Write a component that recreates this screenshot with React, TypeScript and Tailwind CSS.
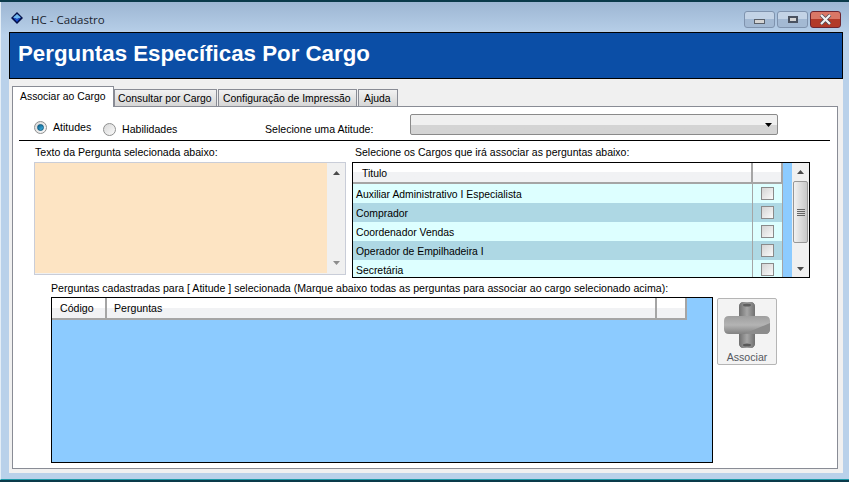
const cargos = [
  "Auxiliar Administrativo I Especialista",
  "Comprador",
  "Coordenador Vendas",
  "Operador de Empilhadeira I",
  "Secretária",
];

function ArrowUp() {
  return (
    <svg width="7" height="4" viewBox="0 0 7 4">
      <path d="M3.5 0 L7 4 L0 4 Z" fill="#4a4a4a" />
    </svg>
  );
}

function ArrowDown({ color = "#4a4a4a" }: { color?: string }) {
  return (
    <svg width="7" height="4" viewBox="0 0 7 4">
      <path d="M0 0 L7 0 L3.5 4 Z" fill={color} />
    </svg>
  );
}

function Radio({ checked }: { checked?: boolean }) {
  return (
    <div className="w-[13px] h-[13px] rounded-full border border-[#8e8f8f] bg-gradient-to-br from-[#d8d8d8] to-[#fafafa] flex items-center justify-center shrink-0">
      {checked && (
        <div className="w-[7px] h-[7px] rounded-full bg-gradient-to-br from-[#0a5f8a] to-[#3fb4e6] border border-[#0d5a80]"></div>
      )}
    </div>
  );
}

function HeaderCell({ className, children }: { className?: string; children?: React.ReactNode }) {
  return (
    <div className={"h-full bg-gradient-to-b from-white from-50% to-[#f1f2f4] to-50% border-r-2 border-b-2 border-[#a5a5a5] flex items-center " + (className ?? "")}>
      {children}
    </div>
  );
}

function PlusIcon() {
  return (
    <svg width="46" height="46" viewBox="0 0 46 46">
      <defs>
        <linearGradient id="plusBody" x1="0" y1="0" x2="0" y2="1">
          <stop offset="0" stopColor="#7f7f7f" />
          <stop offset="0.32" stopColor="#a0a0a0" />
          <stop offset="0.5" stopColor="#b4b4b4" />
          <stop offset="0.68" stopColor="#858585" />
          <stop offset="1" stopColor="#6a6a6a" />
        </linearGradient>
        <linearGradient id="plusArm" x1="0" y1="0" x2="1" y2="0">
          <stop offset="0" stopColor="#6f6f6f" />
          <stop offset="0.5" stopColor="#a6a6a6" />
          <stop offset="1" stopColor="#707070" />
        </linearGradient>
      </defs>
      <path
        d="M20 0 H26 Q31 0 31 5 V14 H41 Q46 14 46 19 V27 Q46 32 41 32 H31 V41 Q31 46 26 46 H20 Q15 46 15 41 V32 H5 Q0 32 0 27 V19 Q0 14 5 14 H15 V5 Q15 0 20 0 Z"
        fill="url(#plusBody)"
      />
      <path d="M20 0 H26 Q31 0 31 5 V14 H15 V5 Q15 0 20 0 Z" fill="url(#plusArm)" />
      <path d="M15 32 H31 V41 Q31 46 26 46 H20 Q15 46 15 41 Z" fill="url(#plusArm)" />
      <path d="M20 32 L46 21 L46 27 Q46 32 41 32 Z" fill="#8c8c8c" />
      <ellipse cx="23" cy="3" rx="4" ry="1.5" fill="#5f5f5f" />
      <ellipse cx="23" cy="43" rx="4" ry="1.5" fill="#5a5a5a" />
    </svg>
  );
}

export default function App() {
  return (
    <div className="w-[849px] h-[482px] overflow-hidden bg-[#0a3a4a] pt-[2px] pb-[2px] text-[10.6px] leading-[13px] text-black font-['Liberation_Sans',sans-serif]">
      <div className="h-[478px] flex flex-col bg-gradient-to-b from-[#9db6d3] from-0% to-[#b9d1ea] to-[7%] pl-[8px] pr-[6px] pb-[6px] border-l border-b border-b-[#1d9aa8] border-l-[#e4eef7]">
        {/* title bar */}
        <div className="h-[30px] shrink-0 flex items-start">
          <svg className="mt-[10px] ml-[2px]" width="12" height="12" viewBox="0 0 12 12">
            <path d="M6 0 L12 6 L6 12 L0 6 Z" fill="#04104a" />
            <path d="M6 2 L10 5.5 L6 7 L2 5.5 Z" fill="#6fb8f0" />
            <path d="M6 7 L10 5.5 L6 10 L2 5.5 Z" fill="#1b4fd0" />
          </svg>
          <span className="ml-[8px] mt-[11px] text-[11.5px] leading-[14px] text-[#1b2530] font-['Open_Sans',sans-serif]">HC - Cadastro</span>
          <div className="ml-auto mt-[9px] mr-[2px] flex gap-[2px]">
            <div className="w-[31px] h-[17px] rounded-[3px] border border-[#7f93ae] bg-gradient-to-b from-[#c3d3e6] from-50% to-[#a3b9d3] to-50% flex items-center justify-center">
              <div className="w-[11px] h-[5px] mt-[3px] bg-[#d4d4d4] border border-[#59606a]"></div>
            </div>
            <div className="w-[31px] h-[17px] rounded-[3px] border border-[#7f93ae] bg-gradient-to-b from-[#c3d3e6] from-50% to-[#a3b9d3] to-50% flex items-center justify-center">
              <div className="w-[10px] h-[7px] bg-[#d4d4d4] border-2 border-[#4a5260]"></div>
            </div>
            <div className="w-[31px] h-[17px] rounded-[3px] border border-[#6d2530] bg-gradient-to-b from-[#d97766] from-50% to-[#b23a28] to-50% flex items-center justify-center">
              <svg width="13" height="11" viewBox="0 0 13 11">
                <path d="M2 1 L11 10 M11 1 L2 10" stroke="#4a4a55" strokeWidth="3.6" />
                <path d="M2 1 L11 10 M11 1 L2 10" stroke="#f2f2f2" strokeWidth="2.2" />
              </svg>
            </div>
          </div>
        </div>

        {/* form */}
        <div className="flex-1 flex flex-col bg-[#f0f0f0]">
          <div className="h-[47px] shrink-0 bg-[#0b4ea6] border border-black flex items-center pl-[8px]">
            <span className="text-[22.3px] leading-[26px] font-bold text-white -mt-[3px]">Perguntas Específicas Por Cargo</span>
          </div>

          {/* tabs */}
          <div className="h-[27px] shrink-0 flex items-end pl-[3px] relative z-10 whitespace-nowrap text-[10.4px]">
            <div className="w-[102px] h-[21px] bg-white border border-b-0 border-[#898c95] -mb-[1px] pl-[7px] pt-[3px]">Associar ao Cargo</div>
            <div className="w-[103px] h-[17px] bg-gradient-to-b from-[#f2f2f2] to-[#d6d6d6] border border-b-0 border-[#898c95] pl-[3px] pt-[2px]">Consultar por Cargo</div>
            <div className="w-[139px] h-[17px] ml-[1px] bg-gradient-to-b from-[#f2f2f2] to-[#d6d6d6] border border-b-0 border-[#898c95] pl-[4px] pt-[2px]">Configuração de Impressão</div>
            <div className="w-[40px] h-[17px] ml-[1px] bg-gradient-to-b from-[#f2f2f2] to-[#d6d6d6] border border-b-0 border-[#898c95] pl-[5px] pt-[2px]">Ajuda</div>
          </div>

          {/* panel */}
          <div className="w-[826px] h-[363px] ml-[3px] bg-white border border-[#898c95]">
            <div className="h-[33px] flex items-start">
              <div className="ml-[21px] mt-[14px]"><Radio checked /></div>
              <span className="ml-[6px] mt-[14px] w-[50px]">Atitudes</span>
              <div className="mt-[16px]"><Radio /></div>
              <span className="ml-[6px] mt-[16px] w-[143px]">Habilidades</span>
              <span className="mt-[16px] w-[145px]">Selecione uma Atitude:</span>
              <div className="mt-[7px] w-[368px] h-[21px] rounded-[2px] border border-[#8a8a8a] bg-gradient-to-b from-[#f0f0f0] from-50% to-[#d4d4d4] to-50% flex items-center justify-end pr-[5px]">
                <ArrowDown color="#000000" />
              </div>
            </div>
            <div className="h-[1px] ml-[6px] w-[811px] bg-black"></div>

            {/* upper section */}
            <div className="flex mt-[5px]">
              <div className="ml-[21px] w-[313px]">
                <div className="h-[16px] ml-[1px]">Texto da Pergunta selecionada abaixo:</div>
                <div className="w-[312px] h-[113px] border border-[#c9cdd8] bg-[#f0f0f0] flex pb-[1px]">
                  <div className="w-[292px] bg-[#fde4c3]"></div>
                  <div className="flex-1 flex flex-col items-center justify-between py-[8px]">
                    <ArrowUp />
                    <ArrowDown color="#8c8c8c" />
                  </div>
                </div>
              </div>

              <div className="ml-[5px] w-[459px]">
                <div className="h-[16px] ml-[3px] text-[10.5px]">Selecione os Cargos que irá associar as perguntas abaixo:</div>
                <div className="w-[458px] h-[116px] border border-black flex overflow-hidden bg-[#ddffff] text-[10.4px]">
                  <div className="w-[430px] shrink-0">
                    <div className="h-[21px] flex">
                      <HeaderCell className="w-[400px] pl-[9px] pt-[1px]">Titulo</HeaderCell>
                      <HeaderCell className="w-[30px]" />
                    </div>
                    {cargos.map((cargo, i) => (
                      <div key={cargo} className={"h-[19px] flex " + (i % 2 === 1 ? "bg-[#aed8e4]" : "bg-[#ddffff]")}>
                        <div className="w-[399px] pl-[3px] pt-[4px] whitespace-nowrap">{cargo}</div>
                        <div className="w-[31px] border-l border-r border-[#a5a5a5] flex items-center justify-center">
                          <div className="w-[13px] h-[13px] border border-[#8a8a8a] bg-gradient-to-br from-[#d4d4d4] to-[#fafafa]"></div>
                        </div>
                      </div>
                    ))}
                  </div>
                  <div className="w-[9px] bg-[#8ccbff] shrink-0"></div>
                  <div className="flex-1 bg-[#f0f0f0] flex flex-col items-center pt-[7px] pb-[6px]">
                    <ArrowUp />
                    <div className="w-[15px] h-[62px] mt-[7px] rounded-[2px] border border-[#979797] bg-gradient-to-r from-[#f2f2f2] to-[#c8c8c8] flex flex-col items-center justify-center gap-[1px]">
                      <div className="w-[8px] h-[1px] bg-[#666666]"></div>
                      <div className="w-[8px] h-[1px] bg-[#666666]"></div>
                      <div className="w-[8px] h-[1px] bg-[#666666]"></div>
                      <div className="w-[8px] h-[1px] bg-[#666666]"></div>
                    </div>
                    <div className="mt-auto"><ArrowDown /></div>
                  </div>
                </div>
              </div>
            </div>

            {/* lower section */}
            <div className="ml-[38px] mt-[4px] h-[15px] whitespace-nowrap">
              Perguntas cadastradas para [ Atitude ] selecionada (Marque abaixo todas as perguntas para associar ao cargo selecionado acima):
            </div>
            <div className="flex ml-[38px]">
              <div className="w-[662px] h-[166px] border border-black bg-[#8ccbff]">
                <div className="h-[22px] flex">
                  <HeaderCell className="w-[55px] pl-[8px]">Código</HeaderCell>
                  <HeaderCell className="w-[550px] pl-[7px]">Perguntas</HeaderCell>
                  <HeaderCell className="w-[30px]" />
                </div>
              </div>
              <div className="ml-[4px] mt-[1px] w-[60px] h-[67px] rounded-[2px] border border-[#b5b5b5] bg-[#f3f3f3] flex flex-col items-center pt-[3px]">
                <PlusIcon />
                <span className="mt-[3px] text-[#55585e]">Associar</span>
              </div>
            </div>
          </div>
        </div>
      </div>
    </div>
  );
}
